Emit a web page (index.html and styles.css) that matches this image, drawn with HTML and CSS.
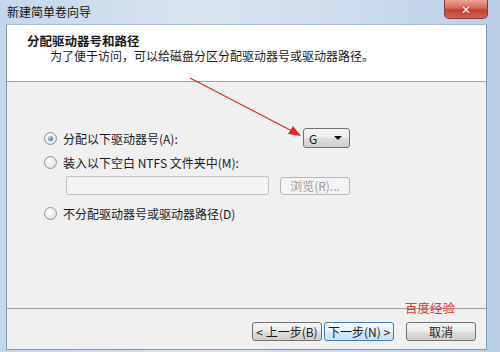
FILE: index.html
```html
<!DOCTYPE html>
<html lang="zh-CN">
<head>
    <meta charset="UTF-8" />
    <title>新建简单卷向导</title>
    <link rel="stylesheet" href="styles.css">
</head>
<body>
    <div class="window">
        <div class="titlebar">
            <span class="title">新建简单卷向导</span>
            <span class="close">✕</span>
        </div>

        <div class="client">
            <div class="header">
                <div class="header-title">分配驱动器号和路径</div>
                <div class="header-sub">为了便于访问，可以给磁盘分区分配驱动器号或驱动器路径。</div>
            </div>

            <div class="content">
                <div class="row row-first">
                    <label class="option">
                        <span class="radio checked"></span>
                        <span>分配以下驱动器号(A):</span>
                    </label>
                    <div class="select">
                        <span>G</span>
                        <span class="caret"></span>
                    </div>
                </div>

                <div class="row row-second">
                    <label class="option">
                        <span class="radio"></span>
                        <span>装入以下空白 NTFS 文件夹中(M):</span>
                    </label>
                </div>

                <div class="row row-path">
                    <div class="path-input"></div>
                    <div class="btn btn-disabled">浏览(R)...</div>
                </div>

                <div class="row row-last">
                    <label class="option">
                        <span class="radio"></span>
                        <span>不分配驱动器号或驱动器路径(D)</span>
                    </label>
                </div>
            </div>

            <div class="footer">
                <div class="btn">&lt; 上一步(B)</div>
                <div class="btn btn-focus">下一步(N) &gt;</div>
                <div class="btn btn-cancel">取消</div>
            </div>
        </div>

        <div class="watermark">百度经验</div>

        <svg class="arrow" width="500" height="352" viewBox="0 0 500 352">
            <line x1="190" y1="78" x2="292" y2="131" stroke="#e2262a" stroke-width="1.2" />
            <polygon points="301,136 288,134 293,126" fill="#e2262a" />
        </svg>
    </div>
</body>
</html>
```

FILE: styles.css
```css
* {
    box-sizing: border-box;
}

body {
    margin: 0;
    width: 500px;
    height: 352px;
    overflow: hidden;
    font-family: "Noto Sans CJK SC", "DejaVu Sans", sans-serif;
    font-size: 12px;
    color: #1a1a1a;
}

.window {
    position: relative;
    width: 500px;
    height: 352px;
    background: linear-gradient(to right, #c4d7ec 0%, #d8e4f1 40%, #cddcee 70%, #b9d0e9 100%);
    padding: 0 13px 2px 6px;
    display: flex;
    flex-direction: column;
}

.titlebar {
    height: 24px;
    display: flex;
    align-items: flex-start;
    justify-content: space-between;
    margin-left: -6px;
    padding-left: 7px;
}

.title {
    margin-top: 3px;
    font-size: 12px;
    color: #111;
}

.close {
    width: 44px;
    height: 19px;
    margin-right: -1px;
    border: 1px solid #8b3a33;
    border-top: none;
    border-radius: 0 0 5px 5px;
    background: linear-gradient(to bottom, #e9a596 0%, #d6695a 45%, #c2412f 55%, #d0644f 100%);
    color: #fff;
    font-size: 12px;
    font-weight: bold;
    text-align: center;
    line-height: 18px;
    text-shadow: 0 0 2px #6a1e16;
}

.client {
    flex: 1;
    display: flex;
    flex-direction: column;
    border: 1px solid #7f97b0;
    border-top-color: #a7b9cc;
    background: #f0f0f0;
}

.header {
    height: 57px;
    background: #fff;
    border-bottom: 1px solid #a0a0a0;
    padding: 9px 0 0 20px;
}

.header-title {
    font-weight: bold;
    font-size: 12.5px;
    line-height: 14px;
}

.header-sub {
    margin-left: 23px;
    margin-top: 1px;
    line-height: 14px;
}

.content {
    flex: 1;
    padding: 46px 0 0 37px;
    border-bottom: 1px solid #a0a0a0;
}

.row {
    display: flex;
    align-items: center;
}

.row-first {
    height: 20px;
}

.row-second {
    margin-top: 6px;
}

.row-path {
    margin-left: 22px;
    margin-top: 5px;
}

.row-last {
    margin-top: 10px;
}

.option {
    display: flex;
    align-items: center;
    gap: 6px;
    width: 259px;
    height: 17px;
}

.radio {
    width: 13px;
    height: 13px;
    border-radius: 50%;
    border: 1px solid #8f8f8f;
    background: radial-gradient(circle at 40% 35%, #ffffff 0%, #e6e6e6 70%, #d2d2d2 100%);
    display: flex;
    align-items: center;
    justify-content: center;
}

.radio.checked::after {
    content: "";
    width: 5px;
    height: 5px;
    border-radius: 50%;
    background: radial-gradient(circle at 35% 35%, #a9d6f5 0%, #2f76bd 80%);
}

.select {
    width: 47px;
    height: 20px;
    border: 1px solid #707070;
    border-radius: 3px;
    background: linear-gradient(to bottom, #f4f4f4 0%, #ebebeb 50%, #dddddd 51%, #cfcfcf 100%);
    display: flex;
    align-items: center;
    justify-content: space-between;
    padding: 0 7px 0 5px;
    font-size: 12px;
}

.caret {
    width: 0;
    height: 0;
    border-left: 4px solid transparent;
    border-right: 4px solid transparent;
    border-top: 4px solid #111;
}

.path-input {
    width: 203px;
    height: 19px;
    border: 1px solid #c2c2c2;
    border-radius: 2px;
    background: #f4f4f4;
}

.btn {
    width: 70px;
    height: 19px;
    border: 1px solid #707070;
    border-radius: 3px;
    background: linear-gradient(to bottom, #f4f4f4 0%, #ebebeb 50%, #dddddd 51%, #cfcfcf 100%);
    display: flex;
    align-items: center;
    justify-content: center;
    font-size: 12px;
    white-space: nowrap;
}

.btn-disabled {
    margin-left: 11px;
    height: 18px;
    border-color: #b4b8bb;
    background: #f4f4f4;
    color: #9a9a9a;
}

.btn-focus {
    margin-left: 2px;
    border-color: #3c7fb1;
    background: linear-gradient(to bottom, #f4fafe 0%, #e6f2fa 50%, #d4e9f7 51%, #c6e0f3 100%);
}

.btn-cancel {
    margin-left: 12px;
}

.footer {
    height: 40px;
    display: flex;
    align-items: flex-start;
    padding: 13px 0 0 245px;
}

.watermark {
    position: absolute;
    left: 405px;
    top: 298px;
    color: #e8352e;
    font-size: 12.5px;
}

.arrow {
    position: absolute;
    left: 0;
    top: 0;
    pointer-events: none;
}
```
